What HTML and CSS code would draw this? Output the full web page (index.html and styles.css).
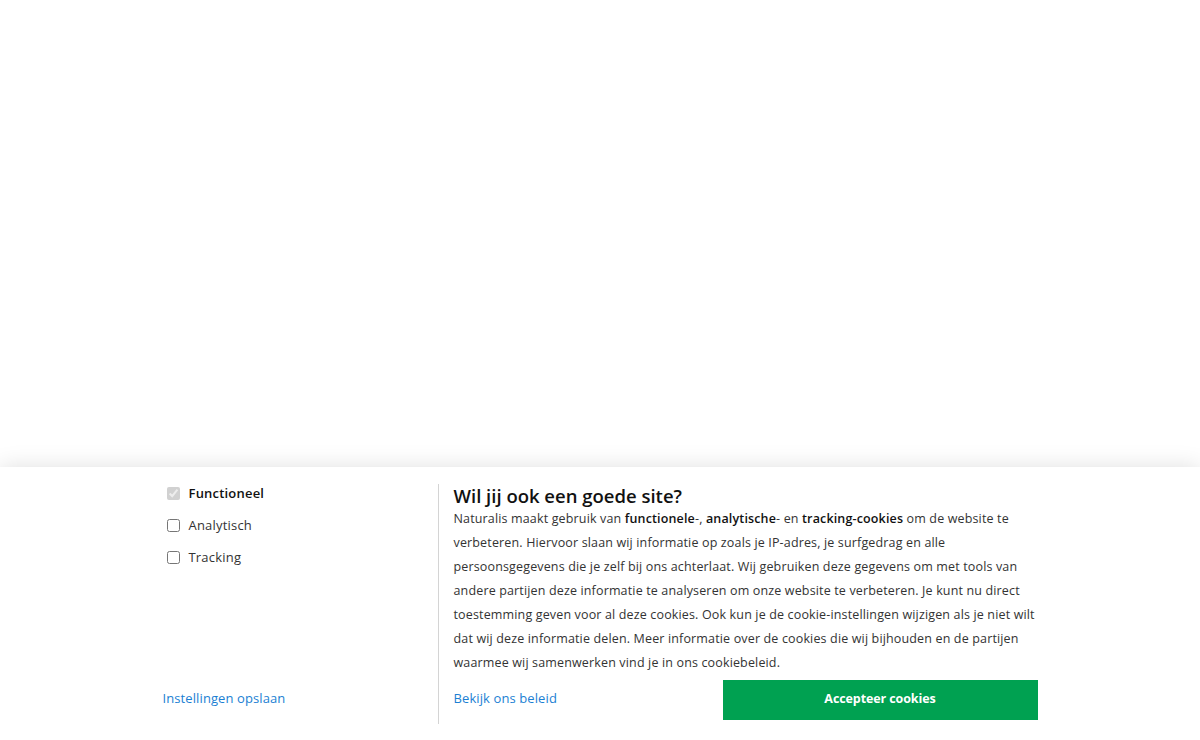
FILE: index.html
```html
<!DOCTYPE html>
<html lang="nl">
<head>
<meta charset="utf-8">
<title>Naturalis</title>
<link rel="stylesheet" href="styles.css">
</head>
<body>
<main class="page"></main>
<section class="cookie-banner">
  <div class="cookie-inner">
    <div class="cookie-settings">
      <div class="cookie-options">
        <label class="cookie-option cookie-option--fixed"><input type="checkbox" checked disabled><span>Functioneel</span></label>
        <label class="cookie-option"><input type="checkbox"><span>Analytisch</span></label>
        <label class="cookie-option"><input type="checkbox"><span>Tracking</span></label>
      </div>
      <a class="cookie-link" href="#">Instellingen opslaan</a>
    </div>
    <div class="cookie-info">
      <h2 class="cookie-title">Wil jij ook een goede site?</h2>
      <p class="cookie-text">Naturalis maakt gebruik van <strong>functionele</strong>-, <strong>analytische</strong>- en <strong>tracking-cookies</strong> om de website te verbeteren. Hiervoor slaan wij informatie op zoals je IP-adres, je surfgedrag en alle persoonsgegevens die je zelf bij ons achterlaat. Wij gebruiken deze gegevens om met tools van andere partijen deze informatie te analyseren om onze website te verbeteren. Je kunt nu direct toestemming geven voor al deze cookies. Ook kun je de cookie-instellingen wijzigen als je niet wilt dat wij deze informatie delen. Meer informatie over de cookies die wij bijhouden en de partijen waarmee wij samenwerken vind je in ons cookiebeleid.</p>
      <div class="cookie-actions">
        <a class="cookie-link cookie-link--policy" href="#">Bekijk ons beleid</a>
        <button class="cookie-accept" type="button">Accepteer cookies</button>
      </div>
    </div>
  </div>
</section>
</body>
</html>
```

FILE: styles.css
```css
* { box-sizing: border-box; }

html, body {
  margin: 0;
  height: 100%;
}

body {
  display: flex;
  flex-direction: column;
  background: #fff;
  font-family: "Open Sans", "Liberation Sans", sans-serif;
  color: #333;
  overflow: hidden;
}

.page {
  flex: 1;
}

.cookie-banner {
  height: 273px;
  background: #fff;
  box-shadow: 0 0 22px rgba(0, 0, 0, 0.13);
  padding: 17px 0 16px;
}

.cookie-inner {
  width: 875px;
  height: 100%;
  margin: 0 auto;
  display: grid;
  grid-template-columns: 275px 1fr;
}

.cookie-settings {
  display: flex;
  flex-direction: column;
  justify-content: space-between;
  padding: 0 0 17px;
}

.cookie-options {
  display: flex;
  flex-direction: column;
  gap: 14px;
}

.cookie-option {
  display: flex;
  align-items: center;
  font-size: 13px;
  line-height: 18px;
  color: #333;
  letter-spacing: 0.2px;
}

.cookie-option input {
  margin: 0 9px 0 4px;
  width: 13px;
  height: 13px;
}

.cookie-option--fixed span {
  font-weight: 600;
  color: #111;
}

.cookie-link {
  color: #1b7fd3;
  text-decoration: none;
  font-size: 13px;
  line-height: 18px;
  letter-spacing: 0.1px;
}

.cookie-link--policy {
  padding-bottom: 4px;
}

.cookie-info {
  border-left: 1px solid #d4d4d4;
  padding-left: 15px;
  display: flex;
  flex-direction: column;
}

.cookie-title {
  margin: 0;
  font-size: 18.5px;
  line-height: 23px;
  font-weight: 600;
  color: #111;
}

.cookie-text {
  margin: 0;
  font-size: 12.5px;
  line-height: 24px;
  color: #333;
  letter-spacing: 0.15px;
}

.cookie-text strong {
  font-weight: 600;
  color: #111;
}

.cookie-actions {
  margin-top: 5px;
  display: flex;
  align-items: center;
  justify-content: space-between;
}

.cookie-accept {
  width: 315px;
  height: 40px;
  border: 0;
  padding: 0 0 4px;
  background: #00a151;
  color: #fff;
  font-family: inherit;
  font-size: 12.5px;
  font-weight: 700;
  letter-spacing: -0.1px;
  cursor: pointer;
}
```
